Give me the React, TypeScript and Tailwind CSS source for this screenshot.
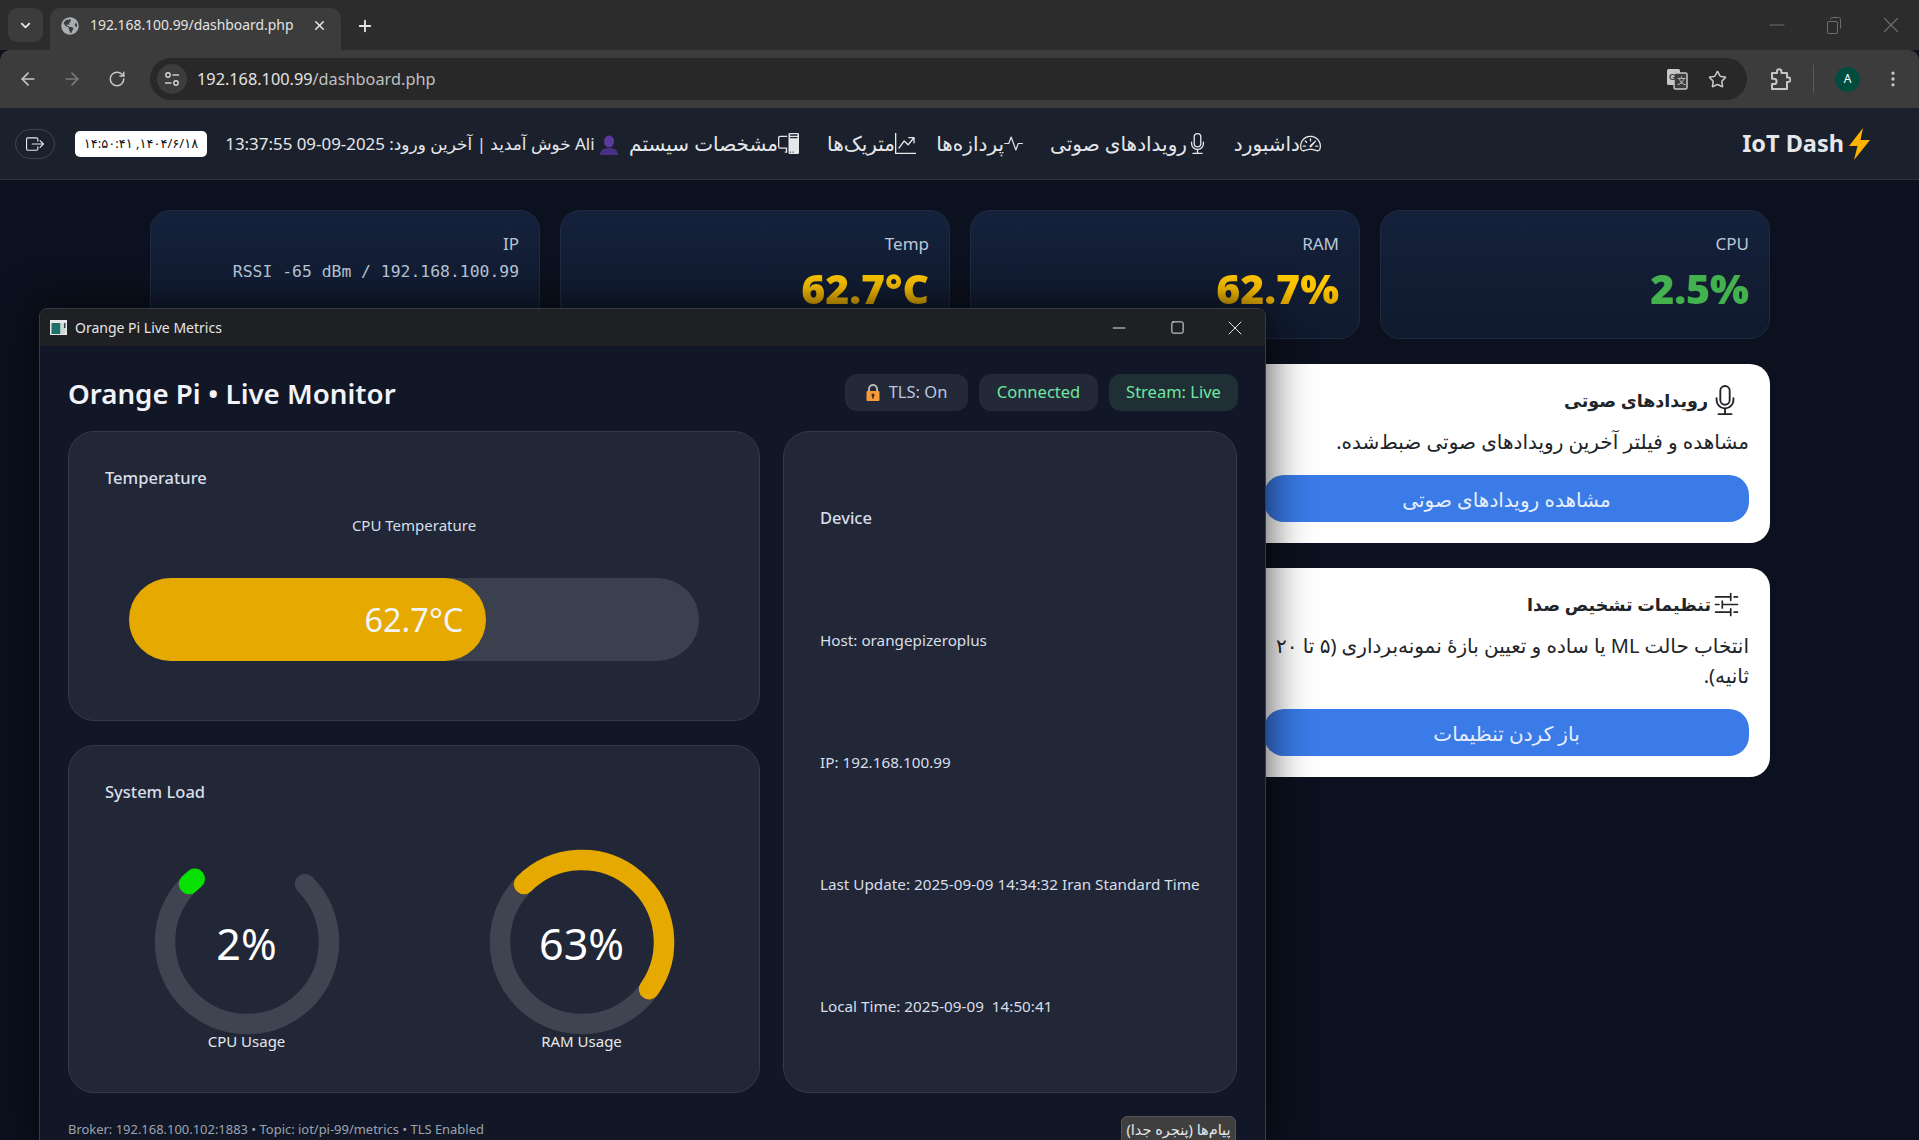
import React from "react";
import { ArrowLeft, ArrowRight, RotateCw, ChevronDown, X, Plus, Minus, Star, EllipsisVertical, Square } from "lucide-react";
import { BsSpeedometer2, BsMic, BsActivity, BsGraphUpArrow, BsPcDisplay, BsSliders2, BsBoxArrowRight } from "react-icons/bs";
import { FaGlobeAmericas } from "react-icons/fa";

const FONT = "[font-family:'Noto_Sans','DejaVu_Sans',sans-serif]";

function polar(cx: number, cy: number, r: number, deg: number) {
  const a = ((deg - 90) * Math.PI) / 180;
  return [cx + r * Math.cos(a), cy + r * Math.sin(a)];
}
function arc(from: number, to: number) {
  const [x1, y1] = polar(92, 92, 82, from);
  const [x2, y2] = polar(92, 92, 82, to);
  const large = to - from > 180 ? 1 : 0;
  return `M ${x1} ${y1} A 82 82 0 ${large} 1 ${x2} ${y2}`;
}

function Gauge({ value, color, text, label }: { value: number; color: string; text: string; label: string }) {
  return (
    <div className="flex w-[184px] flex-col items-center">
      <div className="relative h-[184px] w-[184px]">
        <svg width="184" height="184" viewBox="0 0 184 184" className="overflow-visible">
          <path d={arc(45, 315)} fill="none" stroke="#3f4450" strokeWidth="20.5" strokeLinecap="round" />
          <path d={arc(-45, -45 + value * 2.7)} fill="none" stroke={color} strokeWidth="20.5" strokeLinecap="round" />
        </svg>
        <div className="absolute inset-0 flex items-center justify-center pt-[4px] text-[43px] text-white">{text}</div>
      </div>
      <div className="-mt-[5px] text-[15px] leading-6 text-[#e5e7eb]">{label}</div>
    </div>
  );
}

function Metric({ label, children }: { label: string; children: React.ReactNode }) {
  return (
    <div className="h-[129px] rounded-[20px] border border-[#1f2a40] bg-gradient-to-b from-[#15213b] to-[#101a2e] px-[20px] pt-[21px] text-right">
      <div className="text-[17px] leading-6 text-[#b9c7d8]">{label}</div>
      {children}
    </div>
  );
}

function Value({ text, cls }: { text: string; cls: string }) {
  return <div className={`mt-[6px] text-[41px] leading-[52px] font-black ${cls}`}>{text}</div>;
}

function NavItem({ text, icon, w }: { text: string; icon: React.ReactNode; w: string }) {
  return (
    <div className={`flex items-center justify-end text-[20px] whitespace-nowrap text-[#e5e7eb] ${w}`}>
      <span dir="rtl">{text}</span>
      {icon}
    </div>
  );
}

function Bolt() {
  return (
    <svg width="23" height="32" viewBox="0 0 23 32">
      <path d="M15 0 L1 18 L9.5 18 L6 32 L22 12 L12.5 12 Z" fill="#ffb300" />
    </svg>
  );
}

function Lock() {
  return (
    <svg width="14" height="17" viewBox="0 0 14 17">
      <path d="M3 8 V5 a4 4 0 0 1 8 0 V8" fill="none" stroke="#b6b6b6" strokeWidth="2" />
      <rect x="0.5" y="7" width="13" height="10" rx="1" fill="#f79a3a" />
      <circle cx="7" cy="11" r="1.6" fill="#3b2a1a" />
      <rect x="6.2" y="11" width="1.6" height="3.5" fill="#3b2a1a" />
    </svg>
  );
}

function Person() {
  return (
    <svg width="20" height="20" viewBox="0 0 20 20">
      <ellipse cx="10" cy="6.5" rx="5" ry="6" fill="#5b3a9e" />
      <path d="M1 20 C1 14 6 13 10 13 C14 13 19 14 19 20 Z" fill="#4a2f86" />
    </svg>
  );
}

function Translate() {
  return (
    <svg width="22" height="22" viewBox="0 0 22 22">
      <rect x="1" y="1" width="13" height="16" rx="1.5" fill="#c7c7c7" />
      <rect x="8" y="5" width="13" height="16" rx="1.5" fill="#3c3c3c" stroke="#c7c7c7" strokeWidth="1.5" />
      <text x="3" y="12" fontSize="9" fontWeight="700" fill="#3c3c3c" fontFamily="Liberation Sans">G</text>
      <text x="11" y="16" fontSize="9" fill="#c7c7c7" fontFamily="Noto Sans CJK SC">文</text>
    </svg>
  );
}

function SiteInfo() {
  return (
    <svg width="16" height="16" viewBox="0 0 16 16" fill="none" stroke="#d6d6d6" strokeWidth="1.4">
      <circle cx="4" cy="4" r="2.2" />
      <path d="M8.5 4 H15" />
      <circle cx="12" cy="12" r="2.2" />
      <path d="M1 12 H7.5" />
    </svg>
  );
}

function Extension() {
  return (
    <svg width="21" height="23" viewBox="0 0 21 23" fill="none" stroke="#c7c7c7" strokeWidth="2" strokeLinejoin="round">
      <path d="M2 5 H7 V3.5 a2.2 2.2 0 0 1 4.4 0 V5 H17 V9.5 H18.2 a2.2 2.2 0 0 1 0 4.4 H17 V21 H2 V16 H4 a2.6 2.6 0 0 0 0 -5.2 H2 Z" />
    </svg>
  );
}

function Restore() {
  return (
    <svg width="14" height="17" viewBox="0 0 14 17" fill="none" stroke="#6f6f6f" strokeWidth="1">
      <rect x="0.5" y="4.5" width="10" height="12" rx="1.5" />
      <path d="M3.5 2.5 C3.5 1.2 4.2 0.5 5.5 0.5 H11.5 C12.8 0.5 13.5 1.2 13.5 2.5 V11.5" />
    </svg>
  );
}

function Favicon() {
  return (
    <svg width="17" height="15" viewBox="0 0 17 15">
      <rect width="17" height="15" fill="#e8e8e8" />
      <rect x="1.5" y="3" width="9" height="11" fill="#1f6f6a" />
      <rect x="10.5" y="3" width="5" height="11" fill="#c9d9d4" />
      <rect x="14" y="3" width="1.5" height="5" fill="#33424a" />
    </svg>
  );
}

function Panel({ className, children }: { className?: string; children: React.ReactNode }) {
  return <div className={`rounded-[26px] border border-[#343a48] bg-[#212736] ${className ?? ""}`}>{children}</div>;
}

function ActionCard({ title, icon, desc, button, h }: { title: string; icon: React.ReactNode; desc: string; button: string; h: string }) {
  return (
    <div dir="rtl" className={`flex flex-col rounded-[20px] bg-white pr-[21px] pl-[21px] text-[#212529] ${h}`}>
      <div className="mt-[18px] mr-[9px] flex h-[36px] items-center gap-[2px]">
        {icon}
        <span className="text-[17.5px] font-bold">{title}</span>
      </div>
      <p className="mt-[9px] text-[20px] leading-[30px]">{desc}</p>
      <button className="mt-auto mb-[21px] h-[47px] w-full rounded-[20px] bg-[#3a7be8] pt-[2px] text-[20px] text-[#e8eefc]">{button}</button>
    </div>
  );
}

export default function App() {
  return (
    <div className={`relative h-[1140px] overflow-hidden bg-[#0b111e] ${FONT}`}>
      {/* Browser chrome */}
      <div className="flex h-[50px] items-end bg-[#2c2c2c] pl-[8px]">
        <div className="mb-[8px] flex h-[34px] w-[35px] items-center justify-center rounded-[9px] bg-[#3c3c3c] text-[#e3e3e3]">
          <ChevronDown size={15} strokeWidth={3} />
        </div>
        <div className="ml-[7px] flex h-[42px] w-[291px] items-center rounded-t-[10px] bg-[#3c3c3c] pb-[7px] pl-[11px] text-[13.9px] text-[#e3e3e3]">
          <FaGlobeAmericas size={18} className="text-[#a9adb2]" />
          <span className="ml-[11px] w-[206px] whitespace-nowrap">192.168.100.99/dashboard.php</span>
          <X size={15} strokeWidth={2.5} className="ml-[16px]" />
        </div>
        <Plus size={18} strokeWidth={2.5} className="mb-[15px] ml-[15px] text-[#e3e3e3]" />
        <div className="mb-[12px] ml-auto flex items-center text-[#6f6f6f]">
          <div className="flex w-[57px] justify-center"><Minus size={24} strokeWidth={1} /></div>
          <div className="flex w-[57px] justify-center"><Restore /></div>
          <div className="flex w-[57px] justify-center"><X size={26} strokeWidth={1} /></div>
        </div>
      </div>
      <div className="flex h-[58px] items-center rounded-t-[10px] bg-[#3c3c3c] text-[#c7c7c7]">
        <ArrowLeft size={20} className="ml-[18px]" />
        <ArrowRight size={20} className="ml-[24px] text-[#7a7a7a]" />
        <RotateCw size={18} className="ml-[26px]" />
        <div className="ml-[24px] flex h-[42px] w-[1597px] items-center rounded-full bg-[#282828] pl-[7px] pr-[20px]">
          <div className="flex h-[30px] w-[30px] items-center justify-center rounded-full bg-[#3c3c3c]">
            <SiteInfo />
          </div>
          <span className="ml-[10px] text-[16.3px] text-[#e3e3e3]">
            192.168.100.99<span className="text-[#c0c0c0]">/dashboard.php</span>
          </span>
          <div className="ml-auto flex items-center gap-[20px]">
            <Translate />
            <Star size={19} />
          </div>
        </div>
        <div className="ml-[23px]"><Extension /></div>
        <div className="ml-[22px] h-[28px] w-px bg-[#5a5a5a]" />
        <div className="ml-[21px] flex h-[25px] w-[25px] items-center justify-center rounded-full bg-[#004d40] text-[12px] text-white">A</div>
        <EllipsisVertical size={20} className="ml-[23px]" />
      </div>

      {/* App nav */}
      <div className="flex h-[72px] items-center border-b border-[#2b3340] bg-[#1a212c] pr-[48px] pl-[15px]">
        <div className="flex h-[30px] w-[40px] items-center justify-center rounded-full border border-[#3d4552] text-[#e5e7eb]">
          <BsBoxArrowRight size={18} />
        </div>
        <div dir="rtl" className="ml-[20px] flex h-[26px] w-[132px] items-center justify-center rounded-[5px] bg-white text-[13px] font-normal text-[#111]">
          ۱۴۰۴/۶/۱۸, ۱۴:۵۰:۴۱
        </div>
        <div dir="rtl" className="ml-[22px] w-[390px] text-right text-[16.9px] whitespace-nowrap text-[#e5e7eb]">
          <span className="inline-block align-middle"><Person /></span> Ali خوش آمدید | آخرین ورود: 2025-09-09 13:37:55
        </div>
        <NavItem text="مشخصات سیستم" w="w-[180px]" icon={<BsPcDisplay size={21} />} />
        <NavItem text="متریک‌ها" w="w-[117px]" icon={<BsGraphUpArrow size={21} />} />
        <NavItem text="پردازه‌ها" w="w-[107px]" icon={<BsActivity size={19} />} />
        <NavItem text="رویدادهای صوتی" w="w-[185px]" icon={<BsMic size={21} />} />
        <NavItem text="داشبورد" w="w-[113px]" icon={<BsSpeedometer2 size={21} />} />
        <div className="ml-auto flex items-center gap-[4px] text-[23.5px] font-bold text-[#e5e7eb]">
          IoT Dash
          <Bolt />
        </div>
      </div>

      {/* Page */}
      <div className="pt-[30px] pr-[149px] pl-[150px]">
        <div className="grid grid-cols-4 gap-[20px]">
          <Metric label="IP">
            <div className="mt-[4px] text-[16.4px] leading-6 text-[#b9c7d8] [font-family:'DejaVu_Sans_Mono']">RSSI -65 dBm / 192.168.100.99</div>
          </Metric>
          <Metric label="Temp"><Value text="62.7°C" cls="bg-gradient-to-b from-[#ffce00] via-[#ffc400] to-[#c99400] bg-clip-text text-transparent" /></Metric>
          <Metric label="RAM"><Value text="62.7%" cls="bg-gradient-to-b from-[#ffce00] via-[#ffc400] to-[#c99400] bg-clip-text text-transparent" /></Metric>
          <Metric label="CPU"><Value text="2.5%" cls="text-[#44b14f]" /></Metric>
        </div>
        <div className="mt-[25px] ml-auto flex w-[527px] flex-col gap-[25px]">
          <ActionCard
            h="h-[179px]"
            title="رویدادهای صوتی"
            icon={<BsMic size={30} />}
            desc="مشاهده و فیلتر آخرین رویدادهای صوتی ضبط‌شده."
            button="مشاهده رویدادهای صوتی"
          />
          <ActionCard
            h="h-[209px]"
            title="تنظیمات تشخیص صدا"
            icon={<BsSliders2 size={27} />}
            desc="انتخاب حالت ML یا ساده و تعیین بازهٔ نمونه‌برداری (۵ تا ۲۰ ثانیه)."
            button="باز کردن تنظیمات"
          />
        </div>
      </div>

      {/* Floating metrics window */}
      <div className="absolute top-[308px] left-[39px] h-[840px] w-[1227px] overflow-hidden rounded-t-[8px] border border-[#343a46] bg-[#111726] shadow-[0_0_45px_rgba(0,0,0,0.75)]">
        <div className="flex h-[37px] items-center bg-[#1f2023] pl-[10px] text-[14px] text-[#e5e5e5]">
          <Favicon />
          <span className="ml-[8px]">Orange Pi Live Metrics</span>
          <div className="ml-auto flex items-center pr-[1px] text-[#e5e5e5]">
            <div className="flex w-[58px] justify-center"><Minus size={20} strokeWidth={1.2} /></div>
            <div className="flex w-[58px] justify-center"><Square size={15} strokeWidth={1.6} /></div>
            <div className="flex w-[58px] justify-center"><X size={24} strokeWidth={1} /></div>
          </div>
        </div>
        <div className="pr-[27px] pl-[28px]">
          <div className="flex h-[85px] items-center justify-between pt-[7px]">
            <h1 className="pt-[4px] text-[27.7px] font-semibold text-[#f1f3f8]">Orange Pi • Live Monitor</h1>
            <div className="flex gap-[11px] text-[16.5px]">
              <div className="flex h-[37px] w-[123px] items-center justify-center gap-[9px] rounded-[12px] bg-[#232936] text-[#b9c7e0]"><Lock />TLS: On</div>
              <div className="flex h-[37px] w-[119px] items-center justify-center rounded-[12px] bg-[#232936] text-[#6ee7a0]">Connected</div>
              <div className="flex h-[37px] w-[129px] items-center justify-center rounded-[12px] bg-[#1f2f35] text-[#6ee7a0]">Stream: Live</div>
            </div>
          </div>
          <div className="grid grid-cols-[692px_454px] gap-x-[23px]">
            <div className="flex flex-col gap-[24px]">
              <Panel className="h-[290px] px-[36px] pt-[34px]">
                <div className="text-[16.5px] leading-6 font-medium text-[#d8deea]">Temperature</div>
                <div className="mt-[23px] text-center text-[15px] leading-6 text-[#d8deea]">CPU Temperature</div>
                <div className="mx-[24px] mt-[41px] h-[83px] rounded-full bg-[#3a404d]">
                  <div className="flex h-full items-center justify-end rounded-full bg-[#e5a900] pt-[2px] pr-[23px] text-[32.5px] text-[#f3f4f6]" style={{ width: "62.7%" }}>
                    62.7°C
                  </div>
                </div>
              </Panel>
              <Panel className="h-[348px] px-[36px] pt-[34px]">
                <div className="text-[16.5px] leading-6 font-medium text-[#d8deea]">System Load</div>
                <div className="mt-[46px] flex justify-center gap-[151px]">
                  <Gauge value={2} color="#07e000" text="2%" label="CPU Usage" />
                  <Gauge value={63} color="#e5a900" text="63%" label="RAM Usage" />
                </div>
              </Panel>
            </div>
            <Panel className="flex h-[662px] flex-col justify-between px-[36px] py-[74px] text-[15.25px] leading-6 text-[#d8deea]">
              <div className="text-[16.5px] font-medium">Device</div>
              <div>Host: orangepizeroplus</div>
              <div>IP: 192.168.100.99</div>
              <div>Last Update: 2025-09-09 14:34:32 Iran Standard Time</div>
              <div>Local Time: 2025-09-09&nbsp; 14:50:41</div>
            </Panel>
          </div>
          <div className="mt-[23px] flex items-start justify-between">
            <div className="pt-[3px] text-[12.95px] leading-5 text-[#9ca3af]">Broker: 192.168.100.102:1883 • Topic: iot/pi-99/metrics • TLS Enabled</div>
            <div dir="rtl" className="mr-[2px] flex h-[34px] w-[115px] justify-center rounded-[6px] border border-[#555] bg-[#3f3f3f] pt-[2px] text-[14.5px] whitespace-nowrap text-[#e5e7eb]">پیام‌ها (پنجره جدا)</div>
          </div>
        </div>
      </div>
    </div>
  );
}
